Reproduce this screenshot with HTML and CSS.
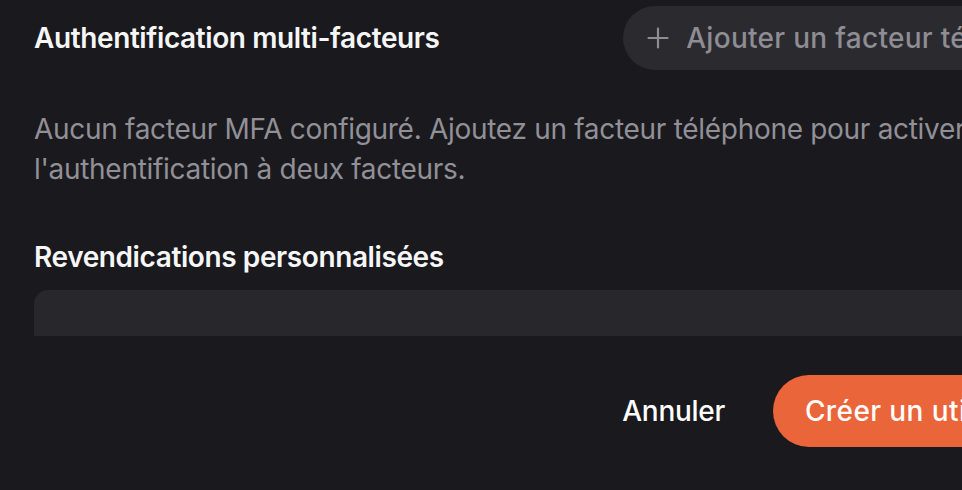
FILE: index.html
```html
<!DOCTYPE html>
<html lang="fr">
<head>
<meta charset="utf-8">
<title>Créer un utilisateur</title>
<link rel="stylesheet" href="styles.css">
</head>
<body>
<div class="modal">
  <div class="modal-body">
    <section class="mfa">
      <div class="mfa-head">
        <h3 class="section-title">Authentification multi-facteurs</h3>
        <button class="add-btn" type="button">
          <svg class="plus" viewBox="0 0 22 22" width="22" height="22" aria-hidden="true"><path d="M11 1.5v19M1.5 11h19" fill="none" stroke="currentColor" stroke-width="2.2" stroke-linecap="round"/></svg>
          <span>Ajouter un facteur téléphone</span>
        </button>
      </div>
      <p class="desc">Aucun facteur MFA configuré. Ajoutez un facteur téléphone pour activer l'authentification à deux facteurs.</p>
    </section>
    <section class="claims">
      <h3 class="section-title">Revendications personnalisées</h3>
      <div class="claims-box"></div>
    </section>
  </div>
  <footer class="modal-footer">
    <button class="btn-ghost" type="button">Annuler</button>
    <button class="btn-primary" type="button">Créer un utilisateur</button>
  </footer>
</div>
</body>
</html>
```
FILE: styles.css
```css
html, body {
  margin: 0;
  padding: 0;
  background: #1a191e;
  overflow: hidden;
}
body {
  font-family: Inter, "Noto Sans", "Liberation Sans", sans-serif;
  color: #f4f4f5;
  width: 962px;
  height: 490px;
  letter-spacing: -0.3px;
}
.modal {
  width: 1120px;
}
.modal-body {
  height: 330px;
  padding: 6px 19px 0 34px;
  overflow: hidden;
}
.mfa-head {
  display: flex;
  align-items: center;
  justify-content: space-between;
}
.section-title {
  margin: 0;
  font-size: 28px;
  line-height: 40px;
  font-weight: 600;
  color: #f6f6f7;
  letter-spacing: -0.4px;
}
.add-btn {
  display: flex;
  align-items: center;
  gap: 17px;
  height: 64px;
  padding: 0 24px;
  border: 0;
  border-radius: 32px;
  background: #2b2a2f;
  color: #8e8d94;
  font-family: inherit;
  font-size: 28px;
  font-weight: 500;
  line-height: 32px;
  letter-spacing: 0.3px;
}
.plus { display: block; }
.desc {
  max-width: 996px;
  margin: 39px 0 0;
  font-size: 28px;
  line-height: 40px;
  color: #919097;
}
.claims {
  margin-top: 48px;
}
.claims .section-title {
  margin-bottom: 13px;
}
.claims-box {
  height: 200px;
  border-radius: 14px;
  background: #28272c;
}
.modal-footer {
  display: flex;
  justify-content: flex-end;
  gap: 16px;
  padding: 39px 20px 0 34px;
}
.btn-ghost, .btn-primary {
  height: 72px;
  padding: 0 32px;
  border: 0;
  border-radius: 36px;
  font-family: inherit;
  font-size: 28px;
  font-weight: 500;
  line-height: 40px;
  letter-spacing: -0.3px;
}
.btn-ghost {
  background: transparent;
  color: #ffffff;
}
.btn-primary {
  background: #eb653a;
  color: #ffffff;
  letter-spacing: 0.4px;
}
```
